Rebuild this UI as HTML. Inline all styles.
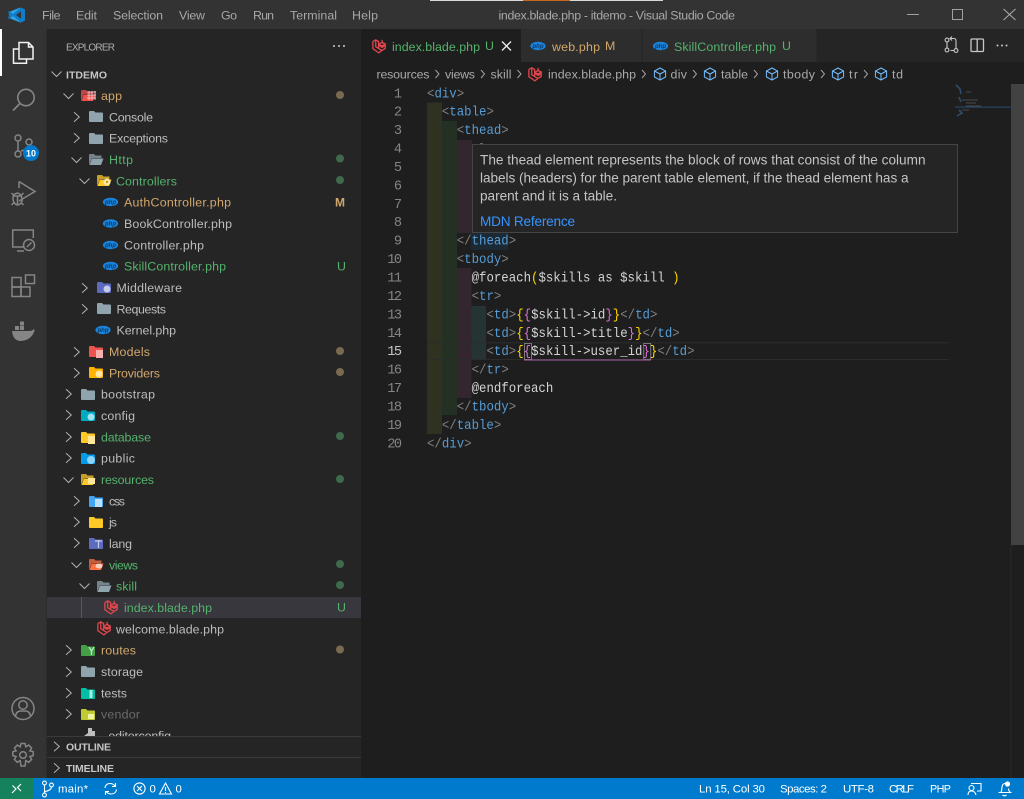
<!DOCTYPE html>
<html><head><meta charset="utf-8"><title>index.blade.php - itdemo - Visual Studio Code</title>
<style>
html,body{margin:0;padding:0;background:#1e1e1e;width:1024px;height:799px;overflow:hidden}
svg{display:block;filter:blur(.3px)}
text{font-family:"Liberation Sans",sans-serif;font-size:12.4px;fill:#bdbdbd;white-space:pre}
.mn text{fill:#a8a8a8}
.code text{font-family:"Liberation Mono",monospace;font-size:14px;fill:#d4d4d4}
.p{fill:#808080}.t{fill:#569cd6}.g{fill:#ffd700}.m{fill:#da70d6}
.ln text{font-family:"Liberation Mono",monospace;font-size:13.6px;fill:#858585;text-anchor:end}
.gr{fill:#56b26d}.ye{fill:#d2a76c}.dim{fill:#6b6b6b}
.st text{fill:#fff;font-size:11.4px}
.ic{fill:none;stroke:#858585;stroke-width:1.5}
.chev{fill:none;stroke:#b0b0b0;stroke-width:1}
.bc text{fill:#a9a9a9}
.cube{fill:none;stroke:#75beff;stroke-width:1}
.lar{fill:none;stroke:#e0474c;stroke-width:1.2}
</style></head><body>
<svg width="1024" height="799" viewBox="0 0 1024 799" xmlns="http://www.w3.org/2000/svg">
<defs>
<path id="cd" d="M-4.5 -2.500 L.5 2.500 L5.500 -2.500"/>
<path id="cr" d="M-3 -4.700 L2.300 0 L-3 4.700"/>
<g id="fc"><path fill="currentColor" d="M0 2 Q0 1 1 1 H5 L6.500 2.500 H13 Q14 2.500 14 3.500 V11 Q14 12 13 12 H1 Q0 12 0 11Z"/></g>
<g id="fo"><path fill="currentColor" opacity=".75" d="M0 2 Q0 1 1 1 H5 L6.500 2.500 H12.500 V5 H3 L0 12Z"/><path fill="currentColor" d="M3 5.500 H14.500 L12 12 H0.500Z"/></g>
<g id="php"><ellipse cx="7.500" cy="5" rx="7.600" ry="4.200" fill="#1a84dc"/><text x="7.500" y="7" text-anchor="middle" style="font-size:6px;fill:#0a3a66;font-style:italic;font-weight:bold">php</text></g>
<g id="lv" transform="scale(1.1)"><path class="lar" d="M0.800 2.200 L3.400 0.800 L6 2.200 V8.600 L9 10.400 L12 8.600 V6 M3.400 0.800 V7 L6 8.600 M0.800 2.200 V8.800 L6.200 12.600 L9 10.400 M6 5 L9.200 3 L12 4.600 L9.200 6.200 L6 5 M9.200 3 V0.800 M12 4.600 V6 L9.200 7.600 L6.400 6"/></g>
<g id="cb"><path class="cube" d="M7 1 L12.600 4 V10 L7 13 L1.400 10 V4Z M1.400 4 L7 7 L12.600 4 M7 7 V13"/></g>
<clipPath id="tree"><rect x="46" y="85" width="315" height="651"/></clipPath>
</defs>

<!-- base -->
<rect width="1024" height="799" fill="#1e1e1e"/>
<rect width="1024" height="29" fill="#333333"/>
<rect x="430" y="0" width="233" height="1" fill="#d8d8d8"/><rect x="523" y="0" width="47" height="1" fill="#c8651e"/>
<rect x="0" y="29" width="46.500" height="749" fill="#333333"/>
<rect x="46.500" y="29" width="314.500" height="749" fill="#252526"/>
<rect x="361" y="29" width="663" height="33" fill="#252526"/>

<!-- title bar -->
<path d="M21 7.500 L25 9.400 V20.600 L21 22.500 L12.800 15.800 L8.200 19.200 L9 15 L8.200 10.800 L12.800 14.200Z" fill="#0f7dca"/>
<path d="M21 7.500 L12.800 14.200 L9.800 11.600 L19.800 7.800Z M21 22.500 L12.800 15.800 L9.800 18.400 L19.800 22.200Z" fill="#2aa6ee"/>
<path d="M21 11.200 V18.800 L16 15Z" fill="#333"/>
<g class="mn">
<text x="42" y="19.500" textLength="18.500">File</text>
<text x="76" y="19.500" textLength="21">Edit</text>
<text x="113" y="19.500" textLength="50">Selection</text>
<text x="179" y="19.500" textLength="26">View</text>
<text x="221" y="19.500" textLength="16">Go</text>
<text x="253" y="19.500" textLength="21">Run</text>
<text x="290" y="19.500" textLength="47">Terminal</text>
<text x="352" y="19.500" textLength="26">Help</text>
<text x="498.500" y="19.500" textLength="236.500">index.blade.php - itdemo - Visual Studio Code</text>
</g>
<path d="M907 14.500 H919" stroke="#a0a0a0" stroke-width="1"/>
<rect x="952.500" y="9.500" width="10" height="10" fill="none" stroke="#a0a0a0"/>
<path d="M1003.500 9 L1015.500 20 M1015.500 9 L1003.500 20" stroke="#a8a8a8" stroke-width="1.100"/>

<!-- tabs -->
<rect x="361" y="29" width="160" height="33" fill="#1e1e1e"/>
<rect x="521" y="29" width="121" height="33" fill="#2d2d2d"/>
<rect x="642" y="29" width="175" height="33" fill="#2d2d2d"/>
<rect x="641.500" y="29" width="1" height="33" fill="#252526"/>
<rect x="816.500" y="29" width="1" height="33" fill="#252526"/>
<use href="#lv" x="372" y="39"/>
<text class="gr" x="392" y="51" textLength="88">index.blade.php</text>
<text class="gr" x="485" y="50" textLength="8">U</text>
<path d="M502 41.500 L511 50.500 M511 41.500 L502 50.500" stroke="#e8e8e8" stroke-width="1.400"/>
<use href="#php" x="530.500" y="41"/>
<text class="ye" x="552" y="51" textLength="48">web.php</text>
<text class="ye" x="605" y="50" textLength="10">M</text>
<use href="#php" x="653" y="41"/>
<text class="gr" x="674" y="51" textLength="102">SkillController.php</text>
<text class="gr" x="782" y="50" textLength="8">U</text>
<!-- editor actions -->
<g fill="none" stroke="#c8c8c8" stroke-width="1.100">
<circle cx="947" cy="40" r="1.900"/><circle cx="947" cy="50" r="1.900"/><circle cx="956" cy="50.500" r="1.900"/>
<path d="M947 42 V48 M950 38.500 H954 Q956 38.500 956 41 V48 M952 36.500 L950 38.500 L952 40.500 M950.500 50.500 H954"/>
</g>
<rect x="971" y="39" width="12.500" height="12.500" fill="none" stroke="#c8c8c8" stroke-width="1.300" rx="1"/><path d="M977.200 39 V51.500" stroke="#c8c8c8" stroke-width="1.300"/>
<circle cx="997.500" cy="45.500" r="1" fill="#c8c8c8"/><circle cx="1002" cy="45.500" r="1" fill="#c8c8c8"/><circle cx="1006.500" cy="45.500" r="1" fill="#c8c8c8"/>

<!-- breadcrumbs -->
<g class="bc">
<text x="376.500" y="78.500" textLength="53">resources</text>
<text x="445" y="78.500" textLength="30">views</text>
<text x="490.500" y="78.500" textLength="21">skill</text>
<text x="548" y="78.500" textLength="88">index.blade.php</text>
<text x="670.500" y="78.500" textLength="16.500">div</text>
<text x="721" y="78.500" textLength="27">table</text>
<text x="783" y="78.500" textLength="32">tbody</text>
<text x="849" y="78.500" textLength="9">tr</text>
<text x="892" y="78.500" textLength="11">td</text>
</g>
<g fill="none" stroke="#a0a0a0" stroke-width="1">
<path d="M435.500 70 L439 74 L435.500 78"/><path d="M481 70 L484.500 74 L481 78"/><path d="M517.500 70 L521 74 L517.500 78"/><path d="M642 70 L645.500 74 L642 78"/><path d="M693 70 L696.500 74 L693 78"/><path d="M754 70 L757.500 74 L754 78"/><path d="M821 70 L824.500 74 L821 78"/><path d="M864 70 L867.500 74 L864 78"/>
</g>
<use href="#lv" x="528" y="67"/>
<use href="#cb" x="653" y="67"/><use href="#cb" x="703" y="67"/><use href="#cb" x="765" y="67"/><use href="#cb" x="831" y="67"/><use href="#cb" x="874" y="67"/>

<!-- indent guides -->
<rect x="427" y="102.500" width="15" height="331.500" fill="#2f3121"/>
<rect x="442" y="121" width="15" height="294" fill="#253025"/>
<rect x="457" y="140" width="15" height="93" fill="#33262f"/>
<rect x="457" y="268" width="14.500" height="130" fill="#33262f"/>
<rect x="471.500" y="306" width="14.500" height="54" fill="#253333"/>
<rect x="471" y="232" width="37" height="18" fill="#1c2a35"/>
<!-- current line -->
<path d="M427 342.700 H949 M427 359.500 H949" stroke="#2c2c2c" stroke-width="1"/>
<rect x="524.500" y="343.500" width="7" height="16" fill="none" stroke="#777" stroke-width="1"/>
<rect x="643.700" y="343.500" width="7" height="16" fill="none" stroke="#777" stroke-width="1"/>
<path d="M524 360 H651" stroke="#a85ea5" stroke-width="1"/>

<!-- line numbers -->
<g class="ln">
<text x="402" y="97.300" textLength="7.400">1</text><text x="402" y="115.700" textLength="7.400">2</text><text x="402" y="134.100" textLength="7.400">3</text><text x="402" y="152.500" textLength="7.400">4</text><text x="402" y="171" textLength="7.400">5</text><text x="402" y="189.400" textLength="7.400">6</text><text x="402" y="207.800" textLength="7.400">7</text><text x="402" y="226.200" textLength="7.400">8</text><text x="402" y="244.700" textLength="7.400">9</text><text x="402" y="263.100" textLength="14.800">10</text><text x="402" y="281.500" textLength="14.800">11</text><text x="402" y="300" textLength="14.800">12</text><text x="402" y="318.400" textLength="14.800">13</text><text x="402" y="336.800" textLength="14.800">14</text><text x="402" y="355.200" textLength="14.800" style="fill:#c6c6c6">15</text><text x="402" y="373.600" textLength="14.800">16</text><text x="402" y="392" textLength="14.800">17</text><text x="402" y="410.500" textLength="14.800">18</text><text x="402" y="428.900" textLength="14.800">19</text><text x="402" y="447.300" textLength="14.800">20</text>
</g>

<!-- code -->
<g class="code" transform="translate(427,0) scale(.885,1)">
<text x="0" y="97.300"><tspan class="p">&lt;</tspan><tspan class="t">div</tspan><tspan class="p">&gt;</tspan></text>
<text x="16.800" y="115.700"><tspan class="p">&lt;</tspan><tspan class="t">table</tspan><tspan class="p">&gt;</tspan></text>
<text x="33.600" y="134.100"><tspan class="p">&lt;</tspan><tspan class="t">thead</tspan><tspan class="p">&gt;</tspan></text>
<text x="33.600" y="244.700"><tspan class="p">&lt;/</tspan><tspan class="t">thead</tspan><tspan class="p">&gt;</tspan></text>
<text x="33.600" y="263.100"><tspan class="p">&lt;</tspan><tspan class="t">tbody</tspan><tspan class="p">&gt;</tspan></text>
<text x="50.400" y="281.500">@foreach<tspan class="g">(</tspan>$skills as $skill <tspan class="g">)</tspan></text>
<text x="50.400" y="300"><tspan class="p">&lt;</tspan><tspan class="t">tr</tspan><tspan class="p">&gt;</tspan></text>
<text x="67.200" y="318.400"><tspan class="p">&lt;</tspan><tspan class="t">td</tspan><tspan class="p">&gt;</tspan><tspan class="g">{</tspan><tspan class="m">{</tspan>$skill-&gt;id<tspan class="m">}</tspan><tspan class="g">}</tspan><tspan class="p">&lt;/</tspan><tspan class="t">td</tspan><tspan class="p">&gt;</tspan></text>
<text x="67.200" y="336.800"><tspan class="p">&lt;</tspan><tspan class="t">td</tspan><tspan class="p">&gt;</tspan><tspan class="g">{</tspan><tspan class="m">{</tspan>$skill-&gt;title<tspan class="m">}</tspan><tspan class="g">}</tspan><tspan class="p">&lt;/</tspan><tspan class="t">td</tspan><tspan class="p">&gt;</tspan></text>
<text x="67.200" y="355.200"><tspan class="p">&lt;</tspan><tspan class="t">td</tspan><tspan class="p">&gt;</tspan><tspan class="g">{</tspan><tspan class="m">{</tspan>$skill-&gt;user_id<tspan class="m">}</tspan><tspan class="g">}</tspan><tspan class="p">&lt;/</tspan><tspan class="t">td</tspan><tspan class="p">&gt;</tspan></text>
<text x="50.400" y="373.600"><tspan class="p">&lt;/</tspan><tspan class="t">tr</tspan><tspan class="p">&gt;</tspan></text>
<text x="50.400" y="392">@endforeach</text>
<text x="33.600" y="410.500"><tspan class="p">&lt;/</tspan><tspan class="t">tbody</tspan><tspan class="p">&gt;</tspan></text>
<text x="16.800" y="428.900"><tspan class="p">&lt;/</tspan><tspan class="t">table</tspan><tspan class="p">&gt;</tspan></text>
<text x="0" y="447.300"><tspan class="p">&lt;/</tspan><tspan class="t">div</tspan><tspan class="p">&gt;</tspan></text>
</g>
<path d="M480 143.500 H483" stroke="#666" stroke-width="1"/>

<!-- hover tooltip -->
<rect x="472.500" y="144.500" width="485" height="88" fill="#252526" stroke="#454545"/>
<text x="480" y="164.500" textLength="445.500" style="font-size:13.600px;fill:#c4c4c4">The thead element represents the block of rows that consist of the column</text>
<text x="480" y="182.500" textLength="428.500" style="font-size:13.600px;fill:#c4c4c4">labels (headers) for the parent table element, if the thead element has a</text>
<text x="480" y="200.500" textLength="137" style="font-size:13.600px;fill:#c4c4c4">parent and it is a table.</text>
<text x="480" y="226" textLength="95" style="font-size:13.600px;fill:#3794ff">MDN Reference</text>

<!-- minimap + scrollbar -->
<rect x="1011" y="84" width="13" height="461" fill="#424242"/>
<rect x="1010.500" y="545" width="1" height="233" fill="#2a2a2a"/>
<rect x="955" y="106.500" width="56" height="1.200" fill="#264f78" opacity=".8"/>
<path d="M956 85 L960 89 L961 94 M959 97 L961 102 M959 110 L962 113 L957 116" fill="none" stroke="#2f5a80" stroke-width="1.600" opacity=".8"/>
<path d="M966 92 H971 M962 100 H978 M966 103 H976 M966 106 H981 M962 110 H969" stroke="#888" stroke-width=".7" opacity=".55"/>

<!-- activity bar -->
<rect x="0" y="29" width="2" height="47" fill="#fff"/>
<g fill="none" stroke="#f2f2f2" stroke-width="1.500">
<path d="M19 49 H13.500 V63.200 H26.500 V59"/>
<path d="M19 42.500 H28.500 L33 47 V59 H19Z M28.500 42.500 V47 H33"/>
</g>
<g class="ic">
<circle cx="26" cy="97.500" r="8.200" style="stroke-width:1.600"/><path d="M20 103.500 L13 110.500" style="stroke-width:1.800"/>
<circle cx="18" cy="138" r="3"/><circle cx="18" cy="154" r="3"/><circle cx="29" cy="142" r="3"/>
<path d="M18 141 V151 M29 145 Q29 149 21 151"/>
<path d="M19 181.500 L35 191.500 L19 201 M19 181.500 V188"/>
<path d="M13 196 H22 M17.500 193 Q12.500 194 13 199 T17.500 205 Q22.500 204 22 199 T17.500 193 M17.500 196 V205 M11.500 193 L14 195.500 M23.500 193 L21 195.500 M11.500 205 L14 202.500 M23.500 205 L21 202.500"/>
<path d="M24 247 H12.700 V230 H33.300 V238 M17 251 H24"/><circle cx="29" cy="245" r="5.500"/>
<path d="M27 247 L29 245 M29 245 L31.500 242.500"/>
<rect x="12" y="277.500" width="9" height="9.500"/><rect x="12" y="287" width="9" height="9.500"/><rect x="21" y="287" width="9" height="9.500"/><rect x="25.500" y="275" width="9" height="8.500"/>
<circle cx="23" cy="708.500" r="11"/><circle cx="23" cy="705" r="4.200"/><path d="M15.500 716.500 Q16 711 21 711 H25 Q30 711 30.500 716.500"/>
<circle cx="23" cy="755" r="3.300"/>
<path d="M21 743.500 H25 L25.800 746.800 L28.700 745.100 L31.600 748 L29.900 750.900 L33.200 751.700 V755.700 L29.900 756.500 L31.600 759.400 L28.700 762.300 L25.800 760.600 L25 766 H21 L20.200 760.600 L17.300 762.300 L14.400 759.400 L16.100 756.500 L12.800 755.700 V751.700 L16.100 750.900 L14.400 748 L17.300 745.100 L20.200 746.800Z"/>
</g>
<path d="M12 331 H30 Q32 331 34 329 Q35 331 34 332 Q31 340 21 341 Q13 341 12 331Z" fill="#858585"/>
<path d="M15 326 h4 v4 h-4z M20 326 h4 v4 h-4z M20 321.500 h4 v4 h-4z" fill="#858585"/>
<circle cx="31" cy="153" r="8" fill="#007acc"/>
<text x="31" y="156.500" text-anchor="middle" style="font-size:9px;font-weight:bold;fill:#fff">10</text>

<!-- explorer -->
<text x="66" y="50.500" textLength="49" style="font-size:10px;fill:#b0b0b0">EXPLORER</text>
<circle cx="334" cy="46" r="1" fill="#ccc"/><circle cx="339" cy="46" r="1" fill="#ccc"/><circle cx="344" cy="46" r="1" fill="#ccc"/>
<use href="#cd" x="56" y="74" class="chev"/>
<text x="66" y="78.500" textLength="41" style="font-size:10.500px;font-weight:bold;fill:#c6c6c6">ITDEMO</text>

<rect x="47" y="597" width="314" height="21" fill="#37373d"/>
<rect x="81" y="597" width="1" height="21" fill="#585858"/>

<g clip-path="url(#tree)">
<!-- chevrons -->
<g class="chev">
<use href="#cd" x="68" y="96"/><use href="#cr" x="77" y="117"/><use href="#cr" x="77" y="138"/><use href="#cd" x="76" y="160"/><use href="#cd" x="84" y="181"/><use href="#cr" x="85" y="288"/><use href="#cr" x="85" y="309"/><use href="#cr" x="77" y="352"/><use href="#cr" x="77" y="373"/><use href="#cr" x="69" y="394"/><use href="#cr" x="69" y="415"/><use href="#cr" x="69" y="437"/><use href="#cr" x="69" y="458"/><use href="#cd" x="68" y="480"/><use href="#cr" x="77" y="501"/><use href="#cr" x="77" y="522"/><use href="#cr" x="77" y="543"/><use href="#cd" x="76" y="565"/><use href="#cd" x="84" y="586"/><use href="#cr" x="69" y="650"/><use href="#cr" x="69" y="672"/><use href="#cr" x="69" y="693"/><use href="#cr" x="69" y="714"/>
</g>
<!-- folder icons -->
<use href="#fo" x="81" y="89" style="color:#ef5350"/>
<path d="M87 92 H96 M87 95 H96 M87 98 H96 M89 91 V100 M92 91 V100 M95 91 V100" stroke="#f7b5b5" stroke-width="1"/>
<use href="#fc" x="89" y="110" style="color:#90a4ae"/>
<use href="#fc" x="89" y="132" style="color:#90a4ae"/>
<use href="#fo" x="89" y="153" style="color:#90a4ae"/>
<use href="#fo" x="97" y="174" style="color:#ffca28"/><circle cx="107" cy="182" r="3.500" fill="#ffe9a8"/><circle cx="107" cy="182" r="1.200" fill="#c69a10"/>
<use href="#fc" x="97" y="281" style="color:#5c6bc0"/><circle cx="107" cy="289" r="3.500" fill="#c5cae9"/>
<use href="#fc" x="97" y="302" style="color:#90a4ae"/>
<use href="#fc" x="89" y="345" style="color:#ef5350"/><rect x="96" y="350" width="7" height="8" fill="#f7b0b0"/>
<use href="#fc" x="89" y="366" style="color:#ffb300"/><circle cx="99" cy="374" r="3.500" fill="#ffe9a8"/>
<use href="#fc" x="81" y="388" style="color:#90a4ae"/>
<use href="#fc" x="81" y="409" style="color:#00acc1"/><circle cx="91" cy="417" r="3.500" fill="#9fe3ee"/>
<use href="#fc" x="81" y="431" style="color:#ffca28"/><rect x="88" y="436" width="7" height="8" fill="#ffe69a"/>
<use href="#fc" x="81" y="452" style="color:#039be5"/><circle cx="91" cy="460" r="4" fill="#8ed3f5"/>
<use href="#fo" x="81" y="473" style="color:#ffca28"/><rect x="88" y="478" width="7" height="6" fill="#ffe69a"/>
<use href="#fc" x="89" y="495" style="color:#42a5f5"/><rect x="95" y="499" width="7" height="8" fill="#bfe0fb"/>
<use href="#fc" x="89" y="516" style="color:#ffca28"/>
<use href="#fc" x="89" y="537" style="color:#5c6bc0"/><path d="M95 541 H102 M98.500 540 V548" stroke="#c5cae9" stroke-width="1.200"/>
<use href="#fo" x="89" y="558" style="color:#ff7043"/><ellipse cx="99" cy="566" rx="3.500" ry="2.500" fill="#ffd0c0"/>
<use href="#fo" x="97" y="580" style="color:#90a4ae"/>
<use href="#fc" x="81" y="644" style="color:#43a047"/><path d="M89 647 L91.500 651 L94 647 M91.500 651 V655" stroke="#b8e5ba" stroke-width="1.300" fill="none"/>
<use href="#fc" x="81" y="665" style="color:#90a4ae"/>
<use href="#fc" x="81" y="687" style="color:#00bfa5"/><rect x="89.500" y="690" width="3" height="8" fill="#a8efe2"/>
<use href="#fc" x="81" y="708" style="color:#c0ca33"/><rect x="88" y="714" width="6" height="5" fill="#eef2a8"/>
<!-- file icons -->
<use href="#php" x="103" y="197"/><use href="#php" x="103" y="218.500"/><use href="#php" x="103" y="240"/><use href="#php" x="103" y="261"/><use href="#php" x="95.500" y="325"/>
<use href="#lv" x="104" y="600"/><use href="#lv" x="97" y="621"/>
<path d="M88 728 h4 v3 h3 v8 h-11 v-3 l4 -3z" fill="#bdbdbd"/>
<!-- labels -->
<text class="ye" x="101" y="100" textLength="21">app</text>
<text x="109" y="121.300" textLength="44">Console</text>
<text x="109" y="142.700" textLength="59">Exceptions</text>
<text class="gr" x="109" y="164" textLength="24">Http</text>
<text class="gr" x="116" y="185.300" textLength="61">Controllers</text>
<text class="ye" x="124" y="206.700" textLength="107">AuthController.php</text>
<text x="124" y="228" textLength="108">BookController.php</text>
<text x="124" y="249.300" textLength="80">Controller.php</text>
<text class="gr" x="124" y="270.600" textLength="102">SkillController.php</text>
<text x="116.500" y="292" textLength="65.500">Middleware</text>
<text x="116.500" y="313.300" textLength="49.500">Requests</text>
<text x="116.500" y="334.600" textLength="59.500">Kernel.php</text>
<text class="ye" x="109" y="356" textLength="41">Models</text>
<text class="ye" x="109" y="377.300" textLength="51">Providers</text>
<text x="101" y="398.600" textLength="54">bootstrap</text>
<text x="101" y="420" textLength="34">config</text>
<text class="gr" x="101" y="441.300" textLength="50">database</text>
<text x="101" y="462.600" textLength="34">public</text>
<text class="gr" x="101" y="484" textLength="53">resources</text>
<text x="109" y="505.300" textLength="16">css</text>
<text x="109" y="526.600" textLength="8">js</text>
<text x="109" y="548" textLength="23">lang</text>
<text class="gr" x="109" y="569.300" textLength="29">views</text>
<text class="gr" x="116" y="590.600" textLength="21">skill</text>
<text class="gr" x="124" y="612" textLength="88">index.blade.php</text>
<text x="116" y="633.300" textLength="108">welcome.blade.php</text>
<text class="ye" x="101" y="654.600" textLength="35">routes</text>
<text x="101" y="676" textLength="42">storage</text>
<text x="101" y="697.300" textLength="26">tests</text>
<text class="dim" x="101" y="718.600" textLength="39">vendor</text>
<text x="105" y="740" textLength="66">.editorconfig</text>
</g>
<!-- git decorations -->
<g>
<circle cx="340" cy="95" r="4" fill="#7a6a50"/>
<circle cx="340" cy="158.500" r="4" fill="#3f6a4c"/>
<circle cx="340" cy="180" r="4" fill="#3f6a4c"/>
<circle cx="340" cy="351" r="4" fill="#7a6a50"/>
<circle cx="340" cy="372" r="4" fill="#7a6a50"/>
<circle cx="340" cy="436" r="4" fill="#3f6a4c"/>
<circle cx="340" cy="479" r="4" fill="#3f6a4c"/>
<circle cx="340" cy="564" r="4" fill="#3f6a4c"/>
<circle cx="340" cy="585" r="4" fill="#3f6a4c"/>
<circle cx="340" cy="649.500" r="4" fill="#7a6a50"/>
</g>
<text class="ye" x="335" y="206.500" textLength="10.500" style="font-weight:bold;font-size:12px">M</text>
<text class="gr" x="337" y="270.500" textLength="8">U</text>
<text class="gr" x="337" y="611.500" textLength="8">U</text>

<!-- outline / timeline -->
<rect x="47" y="736" width="314" height="1" fill="#3a3a3a"/>
<rect x="47" y="757" width="314" height="1" fill="#3a3a3a"/>
<use href="#cr" x="57" y="746.500" class="chev"/>
<use href="#cr" x="57" y="768" class="chev"/>
<text x="66" y="750.500" textLength="45" style="font-size:10.500px;font-weight:bold;fill:#c6c6c6">OUTLINE</text>
<text x="66" y="772" textLength="48" style="font-size:10.500px;font-weight:bold;fill:#c6c6c6">TIMELINE</text>

<!-- status bar -->
<rect x="0" y="778" width="1024" height="21" fill="#007acc"/>
<rect x="0" y="778" width="33" height="21" fill="#16825d"/>
<path d="M12 793 L16 789 L12.500 785.500 M21 784 L17.500 787.500 L21 791" fill="none" stroke="#fff" stroke-width="1.200"/>
<g fill="none" stroke="#fff" stroke-width="1.100">
<circle cx="44.500" cy="783" r="1.900"/><circle cx="44.500" cy="795" r="1.900"/><circle cx="51.500" cy="785" r="1.900"/>
<path d="M44.500 785 V793 M51.500 787 Q51 790.500 45 791.500"/>
<path d="M105 788 Q105.500 783.500 110 783.500 Q113 783.500 115 786 M116.500 789.500 Q116 794 111 794 Q108 794 106 791.500"/>
<path d="M115.500 783 V786.500 H112 M105.500 795 V791.500 H109"/>
<circle cx="139.500" cy="788.500" r="5.600"/><path d="M137 786 L142 791 M142 786 L137 791"/>
<path d="M165.500 783 L171.500 794 H159.500Z M165.500 787 V791 M165.500 792 V793"/>
</g>
<g class="st">
<text x="58" y="792.500" textLength="30">main*</text>
<text x="149.500" y="792.500" textLength="6">0</text>
<text x="175.500" y="792.500" textLength="6">0</text>
<text x="699" y="792.500" textLength="66">Ln 15, Col 30</text>
<text x="780" y="792.500" textLength="47">Spaces: 2</text>
<text x="843" y="792.500" textLength="31">UTF-8</text>
<text x="889" y="792.500" textLength="25">CRLF</text>
<text x="930" y="792.500" textLength="21" style="font-size:10.800px">PHP</text>
</g>
<g fill="none" stroke="#fff" stroke-width="1.100">
<path d="M971 783.500 H981 V791 H977"/><circle cx="971.500" cy="788" r="2.500"/><path d="M968 795 Q968 791 971.500 791 Q975 791 976 795"/>
<path d="M1001 792.500 Q1002 789 1002 787 Q1002.500 783.500 1005 783.500 M998.500 792.500 H1010.500 Q1008.500 791 1008.500 788.500 M1002.500 795 Q1004.500 796.500 1006.500 795"/>
</g>
<circle cx="1007.500" cy="784" r="2.600" fill="#fff"/>
</svg>
</body></html>
